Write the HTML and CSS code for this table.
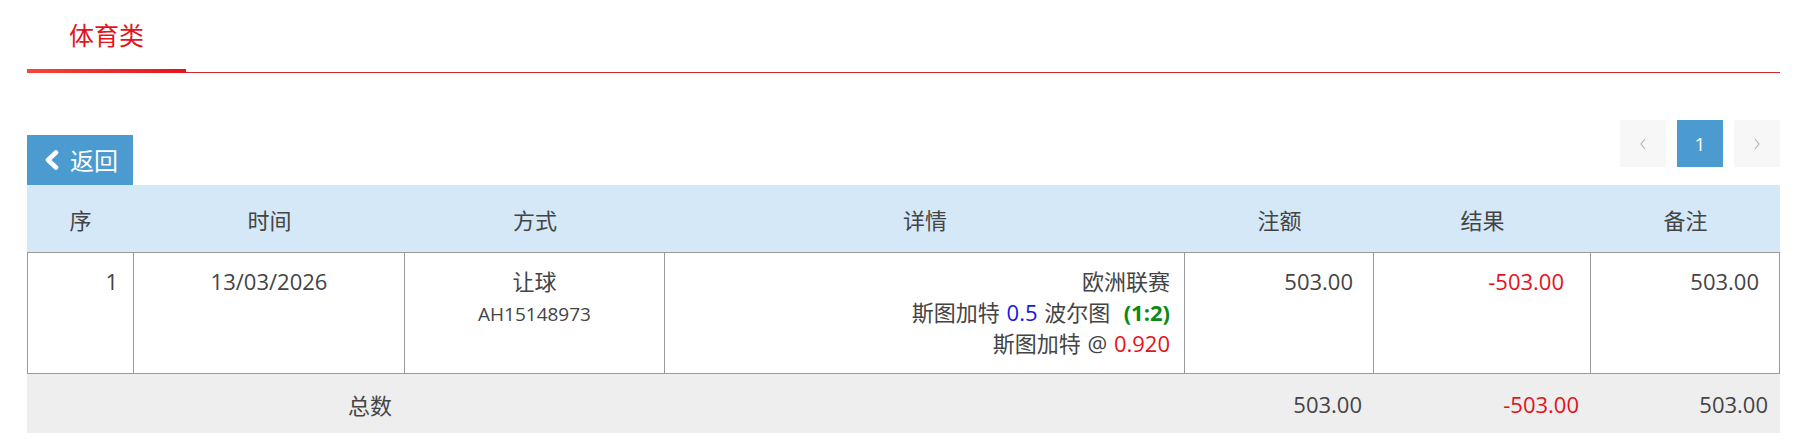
FILE: index.html
```html
<!DOCTYPE html>
<html lang="zh-CN">
<head>
<meta charset="utf-8">
<title>体育类</title>
<link rel="stylesheet" href="styles.css">
</head>
<body>
<div class="page">
  <div class="tabs">
    <div class="tab active">体育类</div>
  </div>

  <div class="toolbar">
    <button class="back-btn" type="button">
      <svg class="back-icon" width="17" height="20" viewBox="0 0 17 20" aria-hidden="true">
        <path d="M13 2.5 L5 10 L13 17.5" fill="none" stroke="#fff" stroke-width="4.6" stroke-linecap="round" stroke-linejoin="round"/>
      </svg>
      <span>返回</span>
    </button>
    <ul class="pager">
      <li class="pg pg-disabled">
        <svg width="8" height="12" viewBox="0 0 8 12" aria-hidden="true"><path d="M6 1 L2 6 L6 11" fill="none" stroke="#b3b3b3" stroke-width="1.2"/></svg>
      </li>
      <li class="pg pg-current">1</li>
      <li class="pg pg-disabled">
        <svg width="8" height="12" viewBox="0 0 8 12" aria-hidden="true"><path d="M2 1 L6 6 L2 11" fill="none" stroke="#b3b3b3" stroke-width="1.2"/></svg>
      </li>
    </ul>
  </div>

  <table class="bets">
    <colgroup>
      <col class="c-no">
      <col class="c-time">
      <col class="c-type">
      <col class="c-detail">
      <col class="c-amount">
      <col class="c-result">
      <col class="c-note">
    </colgroup>
    <thead>
      <tr>
        <th>序</th>
        <th>时间</th>
        <th>方式</th>
        <th>详情</th>
        <th>注额</th>
        <th>结果</th>
        <th>备注</th>
      </tr>
    </thead>
    <tbody>
      <tr>
        <td class="first pr-no">1</td>
        <td class="center">13/03/2026</td>
        <td class="center">
          <div>让球</div>
          <div class="ref">AH15148973</div>
        </td>
        <td class="detail">
          <div class="line">欧洲联赛</div>
          <div class="line">斯图加特 <span class="blue">0.5</span> 波尔图&nbsp; <b class="green">(1:2)</b></div>
          <div class="line">斯图加特 @ <span class="red">0.920</span></div>
        </td>
        <td class="num pr-amount">503.00</td>
        <td class="num pr-result red">-503.00</td>
        <td class="num pr-note">503.00</td>
      </tr>
    </tbody>
    <tfoot>
      <tr>
        <td colspan="4" class="total-label">总数</td>
        <td class="num">503.00</td>
        <td class="num red">-503.00</td>
        <td class="num">503.00</td>
      </tr>
    </tfoot>
  </table>
</div>
</body>
</html>
```

FILE: styles.css
```css
body {
  margin: 0;
  background: #fff;
  color: #444;
  font-family: "Open Sans", "Noto Sans CJK SC", sans-serif;
}

.page {
  margin: 0 25px 0 27px;
}

/* tabs */
.tabs {
  display: flex;
  height: 72px;
  border-bottom: 1px solid #d5262c;
}

.tab {
  position: relative;
  width: 159px;
  box-sizing: border-box;
  padding-top: 21px;
  text-align: center;
  font-size: 25px;
  line-height: 28px;
  color: #e3141b;
}

.tab.active::after {
  content: "";
  position: absolute;
  left: 0;
  right: 0;
  bottom: -1px;
  height: 4px;
  background: linear-gradient(to right, #f6453c, #e5121a);
}

/* toolbar */
.toolbar {
  display: flex;
  justify-content: space-between;
  align-items: flex-start;
  margin-top: 47px;
}

.back-btn {
  display: flex;
  align-items: center;
  gap: 10px;
  margin-top: 15px;
  width: 106px;
  height: 50px;
  padding: 0 0 0 16px;
  border: 0;
  background: #4b9bd1;
  color: #fff;
  font-family: "Noto Sans CJK SC", sans-serif;
  font-size: 24px;
  line-height: 1;
  cursor: pointer;
}

.back-icon {
  flex: none;
}

.pager {
  display: flex;
  gap: 11px;
  margin: 0;
  padding: 0;
  list-style: none;
}

.pg {
  display: flex;
  align-items: center;
  justify-content: center;
  width: 46px;
  height: 47px;
  background: #f7f7f7;
  font-size: 19px;
}

.pg-current {
  background: #4b9bd1;
  color: #fff;
}

/* table */
.bets {
  width: 100%;
  table-layout: fixed;
  border-collapse: separate;
  border-spacing: 0;
  font-size: 22px;
}

.c-no { width: 107px; }
.c-time { width: 271px; }
.c-type { width: 260px; }
.c-detail { width: 520px; }
.c-amount { width: 189px; }
.c-result { width: 217px; }
.c-note { width: 189px; }

.bets th {
  height: 67px;
  padding: 0;
  background: #d4e8f7;
  font-weight: normal;
  text-align: center;
  vertical-align: middle;
  color: #444;
}

.bets tbody td {
  padding: 13px 14px 14px;
  border-top: 1px solid #999;
  border-bottom: 1px solid #999;
  border-right: 1px solid #999;
  vertical-align: top;
  line-height: 31px;
  text-align: right;
}

.bets tbody td.first {
  border-left: 1px solid #999;
}

.bets tbody td.center {
  text-align: center;
}

.ref {
  font-size: 19px;
  line-height: 29px;
  margin-top: 3px;
}

.detail {
  padding-right: 13px;
  word-spacing: 1px;
}

.pr-no { padding-right: 15px !important; }
.pr-amount { padding-right: 20px !important; }
.pr-result { padding-right: 26px !important; }
.pr-note { padding-right: 20px !important; }

.bets tfoot td {
  height: 59px;
  padding: 0 12px 0 0;
  background: #eee;
  vertical-align: middle;
  text-align: right;
}

.bets tfoot td.total-label {
  text-align: left;
  padding-left: 321px;
}

.blue { color: #1515ee; }
.red { color: #e5121a; }
.green { color: #0a8a12; font-weight: bold; }
```
